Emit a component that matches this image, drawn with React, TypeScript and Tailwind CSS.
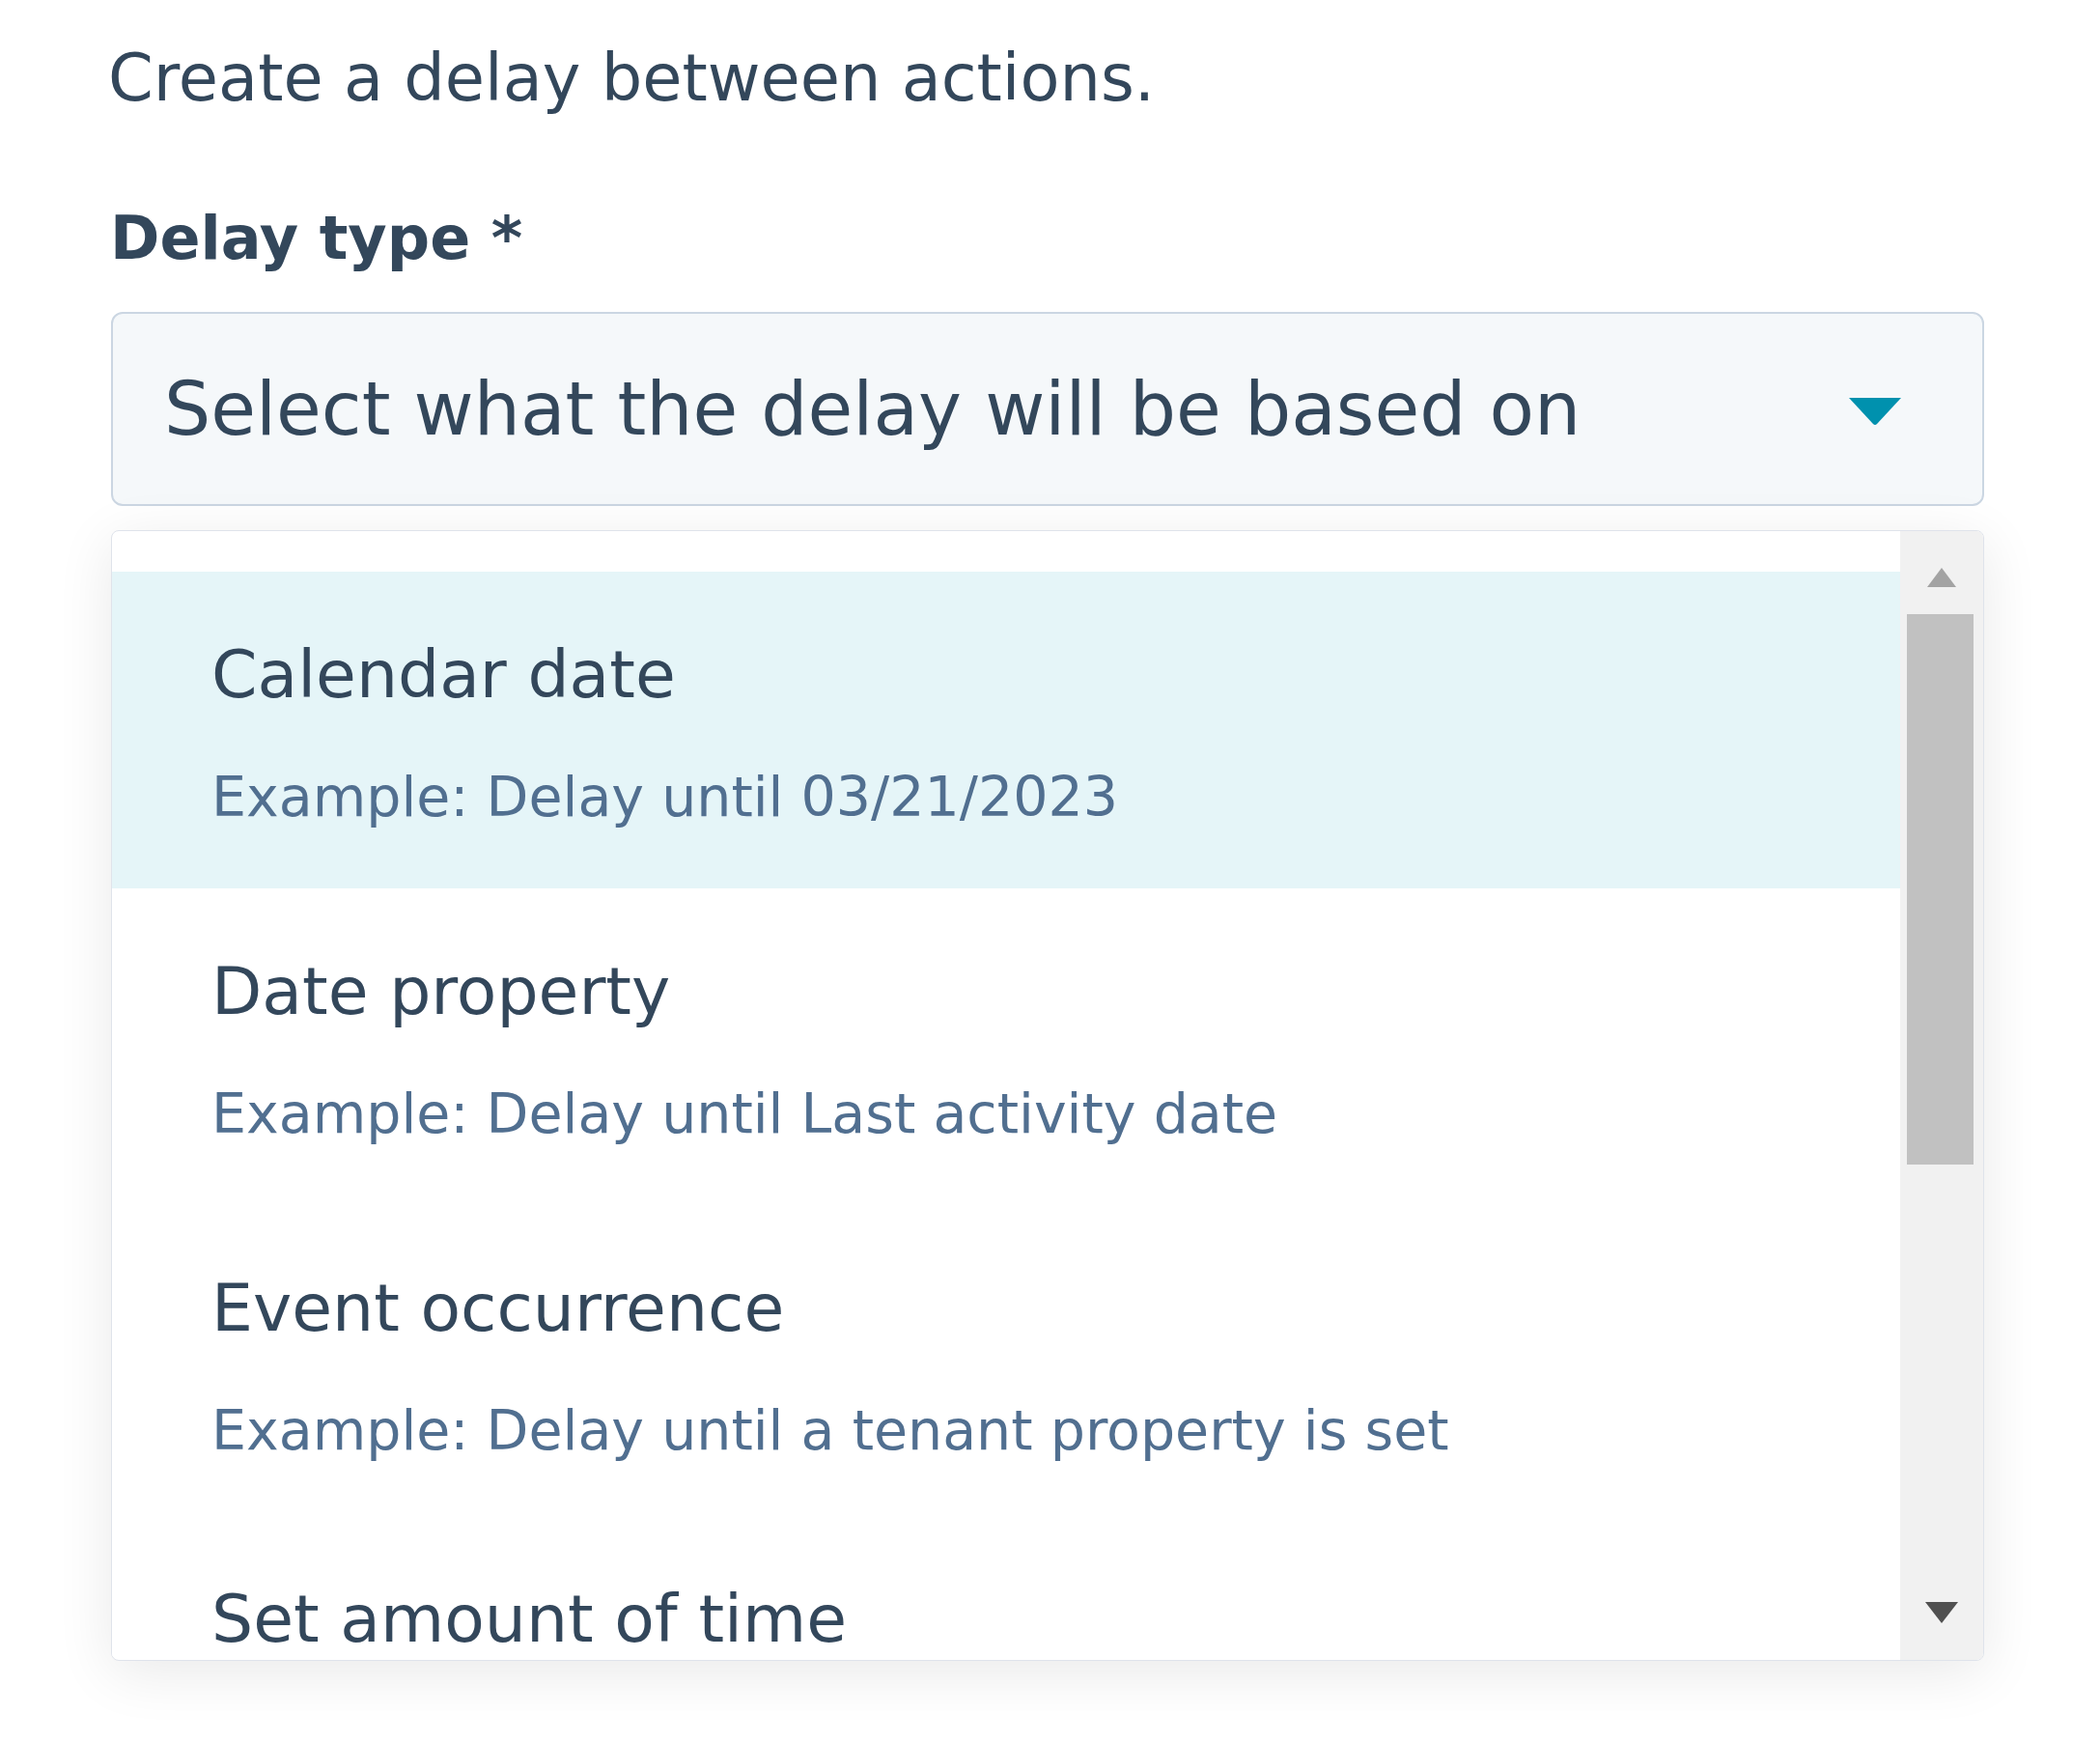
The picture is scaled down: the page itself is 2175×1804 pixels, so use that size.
import React from "react";

const items: { title: string; ex?: string; active?: boolean }[] = [
  { title: "Calendar date", ex: "Example: Delay until 03/21/2023", active: true },
  { title: "Date property", ex: "Example: Delay until Last activity date" },
  { title: "Event occurrence", ex: "Example: Delay until a tenant property is set" },
  { title: "Set amount of time" },
];

export default function App() {
  return (
    <div className="w-[2175px] h-[1804px] bg-white overflow-hidden pt-[41px] pl-[115px] font-['DejaVu_Sans',sans-serif] text-[#33475b]">
      <div className="w-[1940px] flex flex-col">
        <p className="text-[67px] leading-[80px] -ml-[3px]">Create a delay between actions.</p>
        <h2 className="mt-[89px] text-[62px] leading-[74px] font-bold -ml-[1px]">Delay type *</h2>
        <div className="mt-[39px] h-[201px] border-2 border-[#cbd6e2] rounded-[12px] bg-[#f5f8fa] flex items-center justify-between pl-[53px] pr-[82px]">
          <span className="text-[76px] leading-[90px]">Select what the delay will be based on</span>
          <svg width="58" height="30" viewBox="0 0 58 30" className="mt-[4px]">
            <path d="M2 1 H56 L31 28 Q29 30 27 28 Z" fill="#0091ae" />
          </svg>
        </div>
        <div className="mt-[25px] h-[1171px] border border-[#dfe3eb] rounded-[8px] bg-white shadow-[0_12px_60px_rgba(0,0,0,0.09)] flex overflow-hidden">
          <div className="flex-1 pt-[42px] overflow-hidden">
            {items.map((it) => (
              <div
                key={it.title}
                className={`shrink-0 pl-[103px] flex flex-col ${it.ex ? "h-[328px] pt-[73px]" : "h-[140px] pt-[67px]"} ${it.active ? "bg-[#e5f5f8]" : "bg-white"}`}
              >
                <div className="text-[68px] leading-[68px] whitespace-nowrap">{it.title}</div>
                {it.ex && (
                  <div className="mt-[58px] text-[57px] leading-[68px] text-[#516f90] whitespace-nowrap">{it.ex}</div>
                )}
              </div>
            ))}
          </div>
          <div className="w-[86px] bg-[#f1f1f1] flex flex-col">
            <div className="h-[86px] flex items-center justify-center pt-[10px]">
              <svg width="32" height="22" viewBox="0 0 32 22">
                <polygon points="16,1 31,21 1,21" fill="#a3a3a3" />
              </svg>
            </div>
            <div className="ml-[7px] w-[69px] h-[570px] bg-[#c1c1c1]" />
            <div className="flex-1" />
            <div className="h-[98px] flex items-center justify-center">
              <svg width="36" height="24" viewBox="0 0 36 24">
                <polygon points="1,1 35,1 18,23" fill="#505050" />
              </svg>
            </div>
          </div>
        </div>
      </div>
    </div>
  );
}
